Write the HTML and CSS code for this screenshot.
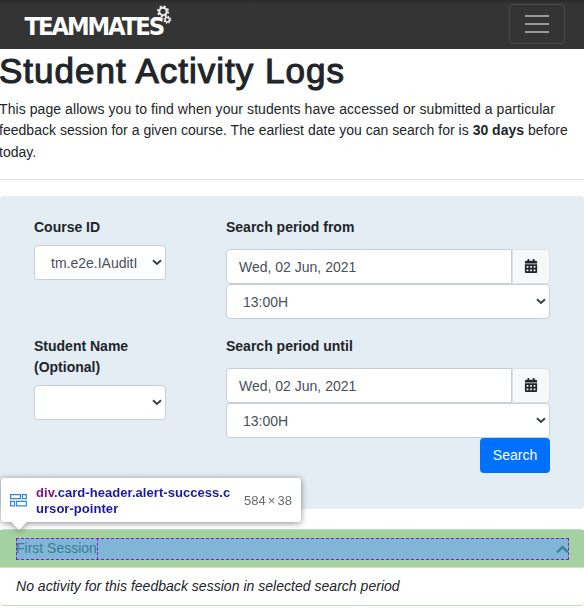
FILE: index.html
```html
<!DOCTYPE html>
<html lang="en">
<head>
<meta charset="utf-8">
<title>Student Activity Logs</title>
<link rel="stylesheet" href="styles.css">
</head>
<body>
<nav class="navbar">
  <svg class="logo" width="150" height="34" viewBox="0 0 150 34">
    <text class="logo-text" x="0.500" y="30.500" textLength="138.500" lengthAdjust="spacingAndGlyphs">TEAMMATES</text>
    <g class="gears">
      <circle cx="139" cy="7.500" r="3.700" stroke-width="2.100"/>
      <circle cx="139" cy="7.500" r="5.200" stroke-width="1.800" stroke-dasharray="2.080 2.005"/>
      <circle cx="143.300" cy="15.700" r="2.200" stroke-width="1.500"/>
      <circle cx="143.300" cy="15.700" r="3.400" stroke-width="1.300" stroke-dasharray="1.300 1.370"/>
    </g>
  </svg>
  <button class="toggler" aria-label="Menu"><span></span><span></span><span></span></button>
</nav>
<main>
  <h1>Student Activity Logs</h1>
  <p class="intro"><span class="lead">This page allows you to find when your students have accessed or submitted a particular</span> feedback session for a given course. The earliest date you can search for is <b>30 days</b> before today.</p>
  <hr>
  <form class="panel">
    <div class="field">
      <label>Course ID</label>
      <div class="select"><select><option>tm.e2e.IAuditI</option></select><svg width="10" height="7" viewBox="0 0 10 7"><path d="M1 1.200 5 5l4-3.800"/></svg></div>
    </div>
    <div class="field period">
      <label>Search period from</label>
      <div class="date"><input value="Wed, 02 Jun, 2021"><button type="button" aria-label="Calendar"><svg width="14" height="14" viewBox="0 0 448 512"><path fill-rule="evenodd" d="M0 464c0 26.500 21.500 48 48 48h352c26.500 0 48-21.500 48-48V192H0zM64 256h64v64H64zm128 0h64v64h-64zm128 0h64v64h-64zM64 384h64v64H64zm128 0h64v64h-64zm128 0h64v64h-64zM0 160v-48c0-26.500 21.500-48 48-48h48V16c0-8.800 7.200-16 16-16h32c8.800 0 16 7.200 16 16v48h128V16c0-8.800 7.200-16 16-16h32c8.800 0 16 7.200 16 16v48h48c26.500 0 48 21.500 48 48v48z"/></svg></button></div>
      <div class="select"><select><option>13:00H</option></select><svg width="10" height="7" viewBox="0 0 10 7"><path d="M1 1.200 5 5l4-3.800"/></svg></div>
    </div>
    <div class="field">
      <label>Student Name (Optional)</label>
      <div class="select"><select><option></option></select><svg width="10" height="7" viewBox="0 0 10 7"><path d="M1 1.200 5 5l4-3.800"/></svg></div>
    </div>
    <div class="field period">
      <label>Search period until</label>
      <div class="date"><input value="Wed, 02 Jun, 2021"><button type="button" aria-label="Calendar"><svg width="14" height="14" viewBox="0 0 448 512"><path fill-rule="evenodd" d="M0 464c0 26.500 21.500 48 48 48h352c26.500 0 48-21.500 48-48V192H0zM64 256h64v64H64zm128 0h64v64h-64zm128 0h64v64h-64zM64 384h64v64H64zm128 0h64v64h-64zm128 0h64v64h-64zM0 160v-48c0-26.500 21.500-48 48-48h48V16c0-8.800 7.200-16 16-16h32c8.800 0 16 7.200 16 16v48h128V16c0-8.800 7.200-16 16-16h32c8.800 0 16 7.200 16 16v48h48c26.500 0 48 21.500 48 48v48z"/></svg></button></div>
      <div class="select"><select><option>13:00H</option></select><svg width="10" height="7" viewBox="0 0 10 7"><path d="M1 1.200 5 5l4-3.800"/></svg></div>
      <button type="button" class="search">Search</button>
    </div>
  </form>
  <section class="card">
    <div class="tooltip">
      <svg width="17" height="13" viewBox="0 0 17 13"><path d="M.6.6h9.800v4H.6zM12.400.6h3.900v4h-3.900zM.6 7.300h3.900v4.600H.6zM6.500 7.300h9.800v4.600H6.500z"/></svg>
      <div class="selector"><span>div</span>.card-header.alert-success.cursor-pointer</div>
      <div class="size">584 × 38</div>
    </div>
    <div class="card-header">
      <div class="highlight">
        <span>First Session</span>
        <svg width="13" height="9" viewBox="0 0 13 9"><path d="M1.200 7.200 6.500 2l5.300 5.200"/></svg>
      </div>
    </div>
    <div class="card-body">No activity for this feedback session in selected search period</div>
  </section>
</main>
</body>
</html>
```
FILE: styles.css
```css
* { box-sizing: border-box; }
body { margin: 0; background: #fff; color: #212529; font: 14px/21px "Liberation Sans", Arial, sans-serif; overflow: hidden; }
button, input, select { font: inherit; margin: 0; }
.navbar { height: 49px; display: flex; justify-content: space-between; align-items: flex-start; padding: 4px 19px 0 24px; background: linear-gradient(#292929, #343434 4px, #343434); }
.logo { overflow: visible; }
.logo-text { font: bold 24px "DejaVu Sans", sans-serif; letter-spacing: -2.2px; fill: #fff; }
.gears circle { fill: none; stroke: #eee; }
.toggler { width: 56px; height: 40px; padding: 0 15px; border: 1px solid #484848; border-radius: 4px; background: none; display: flex; flex-direction: column; justify-content: center; gap: 6px; }
.toggler span { height: 2px; background: #999; }
h1 { margin: 0 0 7px -1px; padding-top: 1px; font-size: 35px; line-height: 42px; font-weight: 400; letter-spacing: 1px; -webkit-text-stroke: 1.1px #212529; white-space: nowrap; }
.intro { margin: 0 0 16px -1px; line-height: 21.400px; letter-spacing: .02px; }
.lead { letter-spacing: .075px; }
.intro b { letter-spacing: 0; }
hr { margin: 0 0 16px; border: 0; border-top: 1px solid #dedede; }
.panel { height: 313px; border-radius: 4px; background: #e4ecf4; padding: 21px 34px 0; display: grid; grid-template-columns: 132px 324px; column-gap: 60px; row-gap: 17px; align-content: start; }
label { display: block; font-weight: 700; margin-bottom: 7px; }
.period label { margin-bottom: 11px; }
.select { position: relative; height: 35px; }
.select select { display: block; width: 100%; height: 35px; appearance: none; border: 1px solid #c8d0d7; border-radius: 4px; background: #fff; color: #495057; padding: 2px 16px 0; }
.select svg { position: absolute; right: 4px; top: 14px; fill: none; stroke: #374047; stroke-width: 1.9; }
.date { display: flex; height: 35px; }
.date input { width: 286px; border: 1px solid #c8d0d7; border-radius: 4px 0 0 4px; padding: 2px 12px 0; color: #495057; }
.date button { width: 38px; padding: 0; border: 1px solid #dcdfe3; border-radius: 0 4px 4px 0; background: #f7f8fa; }
.date svg { display: block; margin: -1px auto 0; fill: #212529; }
.search { display: block; width: 70px; height: 35px; margin-left: auto; border: 0; border-radius: 4px; background: #0070ff; color: #fff; padding: 0; }
.card { position: relative; margin-top: 20px; height: 77px; border: solid #b8dfc3; border-width: 1px 0; border-radius: 4px; }
.card-header { height: 38px; padding: 8px 15px 8px 16px; background: #a3d1a2; border-bottom: 1px solid #dddda0; }
.highlight { height: 22px; display: flex; align-items: center; justify-content: space-between; background: #81b6d6; outline: 1px dashed #7a22c5; outline-offset: -1px; color: #387f98; }
.highlight span { height: 22px; border-right: 1px dashed #7a22c5; line-height: 20px; }
.highlight svg { fill: none; stroke: #387f98; stroke-width: 2.200; }
.card-body { padding: 8px 16px; font-style: italic; letter-spacing: .025px; }
.tooltip { position: absolute; left: 1px; top: -52px; width: 300px; height: 44px; display: flex; align-items: center; padding: 0 9px; border-radius: 3px; background: #fff; filter: drop-shadow(0 1px 3px #0007); font-size: 13px; line-height: 16px; }
.tooltip::after { content: ""; position: absolute; left: 10px; top: 44px; border: 8px solid transparent; border-top-color: #fff; border-bottom: 0; }
.tooltip svg { fill: none; stroke: #3185df; stroke-width: 1.200; flex: none; }
.selector { width: 198px; margin-left: 9px; padding-top: 1px; font-weight: 700; color: #1a1aa6; word-break: break-all; letter-spacing: .05px; }
.selector span { color: #881280; }
.size { margin-left: auto; padding-top: 2px; color: #6a6a6a; word-spacing: -1.500px; white-space: nowrap; }
```
